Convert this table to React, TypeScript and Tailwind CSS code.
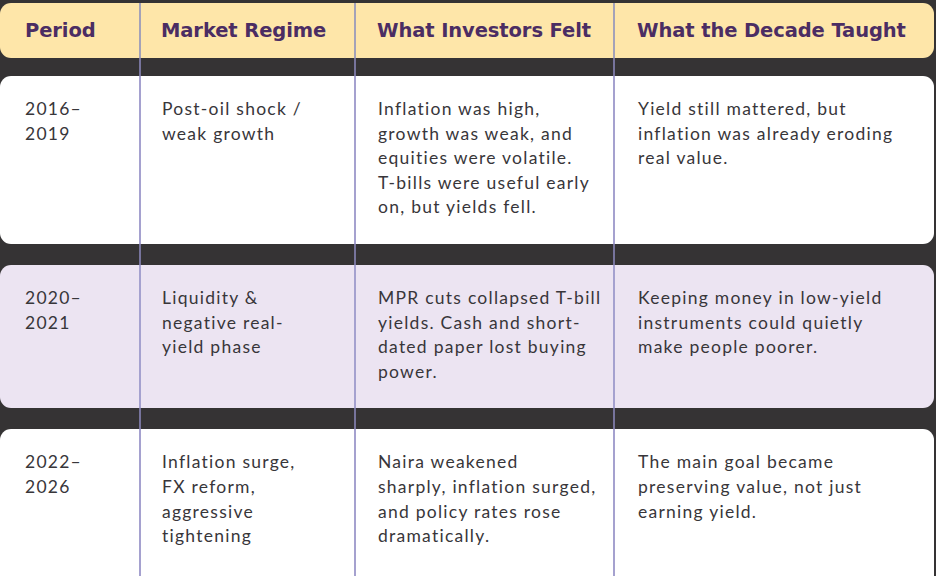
import React from "react";

const cols = "grid grid-cols-[139px_215px_259px_1fr]";

const rows = [
  {
    bg: "bg-white",
    pb: "pb-[24px]",
    cells: [
      ["2016–", "2019"],
      ["Post-oil shock /", "weak growth"],
      ["Inflation was high,", "growth was weak, and", "equities were volatile.", "T-bills were useful early", "on, but yields fell."],
      ["Yield still mattered, but", "inflation was already eroding", "real value."],
    ],
  },
  {
    bg: "bg-[#ece4f2]",
    pb: "pb-[24px]",
    cells: [
      ["2020–", "2021"],
      ["Liquidity &", "negative real-", "yield phase"],
      ["MPR cuts collapsed T-bill", "yields. Cash and short-", "dated paper lost buying", "power."],
      ["Keeping money in low-yield", "instruments could quietly", "make people poorer."],
    ],
  },
  {
    bg: "bg-white",
    pb: "pb-[60px]",
    cells: [
      ["2022–", "2026"],
      ["Inflation surge,", "FX reform,", "aggressive", "tightening"],
      ["Naira weakened", "sharply, inflation surged,", "and policy rates rose", "dramatically."],
      ["The main goal became", "preserving value, not just", "earning yield."],
    ],
  },
];

const headers = ["Period", "Market Regime", "What Investors Felt", "What the Decade Taught"];
const padL = ["pl-[25px]", "pl-[21px]", "pl-[22px]", "pl-[23px]"];
const hPadL = ["pl-[25px]", "pl-[20px]", "pl-[21px]", "pl-[22px]"];

function Gap({ h }: { h: string }) {
  return (
    <div className={`${cols} ${h}`}>
      <div />
      <div className="border-l-2 border-[#77749c]" />
      <div className="border-l-2 border-[#77749c]" />
      <div className="border-l-2 border-[#77749c]" />
    </div>
  );
}

export default function App() {
  return (
    <div className="h-[576px] w-[936px] overflow-hidden bg-[#353334] pt-[3px] pr-[2px]">
      <div className={`${cols} h-[55px] rounded-[11px] bg-[#fee6a9]`} style={{ fontFamily: '"DejaVu Sans", sans-serif' }}>
        {headers.map((h, i) => (
          <div
            key={h}
            className={`flex items-center ${hPadL[i]} ${i > 0 ? "border-l-2 border-[#a4a2b8]" : ""} text-[19.5px] font-bold tracking-[-0.1px] text-[#4b2d63]`}
          >
            {h}
          </div>
        ))}
      </div>
      {rows.map((r, ri) => (
        <React.Fragment key={ri}>
          <Gap h={ri === 0 ? "h-[18px]" : "h-[21px]"} />
          <div
            className={`${cols} rounded-[11px] ${r.bg} text-[17.5px] leading-[24.6px] tracking-[1.25px] text-[#38363a]`}
            style={{ fontFamily: 'Lato, sans-serif' }}
          >
            {r.cells.map((lines, ci) => (
              <div
                key={ci}
                className={`pt-[21px] ${r.pb} ${padL[ci]} ${ci > 0 ? "border-l-2 border-[#a5a1cf]" : ""}`}
              >
                {lines.map((l, li) => (
                  <div key={li} className="whitespace-nowrap">
                    {l}
                  </div>
                ))}
              </div>
            ))}
          </div>
        </React.Fragment>
      ))}
    </div>
  );
}
